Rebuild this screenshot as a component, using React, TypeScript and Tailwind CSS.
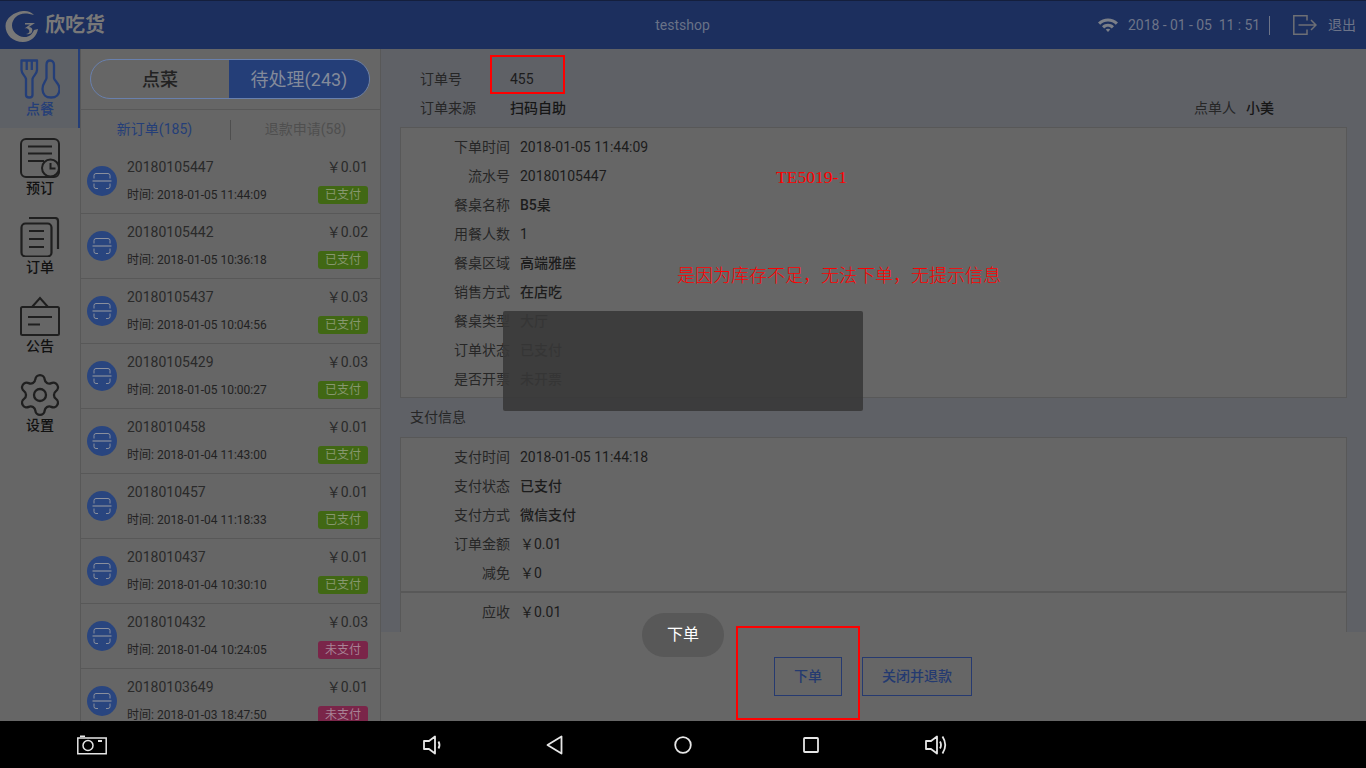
import { Settings } from "lucide-react";

const orders = [
  ["20180105447", "￥0.01", "2018-01-05 11:44:09", true],
  ["20180105442", "￥0.02", "2018-01-05 10:36:18", true],
  ["20180105437", "￥0.03", "2018-01-05 10:04:56", true],
  ["20180105429", "￥0.03", "2018-01-05 10:00:27", true],
  ["2018010458", "￥0.01", "2018-01-04 11:43:00", true],
  ["2018010457", "￥0.01", "2018-01-04 11:18:33", true],
  ["2018010437", "￥0.01", "2018-01-04 10:30:10", true],
  ["2018010432", "￥0.03", "2018-01-04 10:24:05", false],
  ["20180103649", "￥0.01", "2018-01-03 18:47:50", false],
] as const;

const box1 = [
  ["下单时间", "2018-01-05 11:44:09"],
  ["流水号", "20180105447"],
  ["餐桌名称", "B5桌"],
  ["用餐人数", "1"],
  ["餐桌区域", "高端雅座"],
  ["销售方式", "在店吃"],
  ["餐桌类型", "大厅"],
  ["订单状态", "已支付"],
  ["是否开票", "未开票"],
];
const box2 = [
  ["支付时间", "2018-01-05 11:44:18"],
  ["支付状态", "已支付"],
  ["支付方式", "微信支付"],
  ["订单金额", "￥0.01"],
  ["减免", "￥0"],
];

function Row({ label, value }: { label: string; value: string }) {
  const cjk = /[\u4e00-\u9fff]/.test(value);
  return (
    <div className="flex h-[29px] items-center text-[14px]">
      <div className="w-[109px] text-right text-[#262626]">{label}</div>
      <div className={`ml-[10px] text-[#1c1c1c] ${cjk ? "font-medium" : "font-normal"}`}>{value}</div>
    </div>
  );
}

function ScanIcon() {
  return (
    <svg width="30" height="30" viewBox="0 0 30 30" className="shrink-0">
      <circle cx="15" cy="15" r="15" fill="#29457f" />
      <path d="M7 12.500V9.500Q7 7.500 9 7.500H21Q23 7.500 23 9.500V12.500" fill="none" stroke="#8a8f9c" strokeWidth="1" />
      <path d="M7 17.500V20.500Q7 22.500 9 22.500H11M19 22.500H21Q23 22.500 23 20.500V17.500" fill="none" stroke="#8a8f9c" strokeWidth="1" />
      <path d="M5.500 15H24.500" stroke="#8a8f9c" strokeWidth="1.200" />
    </svg>
  );
}

function SideItem({ label, active, children }: { label: string; active?: boolean; children: React.ReactNode }) {
  return (
    <div className={`flex h-[79px] flex-col items-center pt-[10px] ${active ? "border-r-2 border-[#243e78] bg-[#5e6166] pl-[2px]" : ""}`}>
      <div className="h-[40px] w-[40px]">{children}</div>
      <div className={`text-[14px] font-medium leading-[20px] ${active ? "text-[#243e78]" : "text-[#111111]"}`}>{label}</div>
    </div>
  );
}

export default function App() {
  return (
    <div className="relative flex h-[768px] w-[1366px] flex-col overflow-hidden bg-[#666666] font-['Roboto','Noto_Sans_CJK_SC',sans-serif]">
      <header className="flex h-[49px] shrink-0 items-center border-t border-[#141f3d] bg-[#1c2f5e]">
        <svg width="36" height="36" viewBox="0 0 36 36" className="ml-[4px] shrink-0">
          <path d="M30 8C27 4.500 23 3.500 19 4C10 5 1.500 11 1.500 19C1.500 28 9 35 19 35C27 35 33 29 34 22L30 23C28 28 24 30.500 20 30C14 29.500 8 25 8 18.500C8 12 14 6.500 21 6.500C24 6.500 27 7.200 30 8Z" fill="#787878" />
          <path d="M21 16H31L25 20C28 20.500 29 22 28 25C27 27 25 27.500 22 27C25 26.500 26 24.500 25 23C24 21.500 22.500 21 20.500 21.500L26 17.500H21Z" fill="#787878" />
        </svg>
        <div className="ml-[5px] text-[20px] font-bold leading-none text-[#787878]">欣吃货</div>
        <div className="flex-1 text-center text-[14px] text-[#697287]">
          <span className="relative left-[81px]">testshop</span>
        </div>
        <svg width="20" height="14" viewBox="0 0 20 14" className="shrink-0">
          <path d="M0 4.500C5.500 -1 14.500 -1 20 4.500L17.800 6.800C13.500 2.500 6.500 2.500 2.200 6.800Z M4 8.200C7.500 5 12.500 5 16 8.200L13.800 10.400C11.500 8.300 8.500 8.300 6.200 10.400Z M7.700 11.600C9 10.600 11 10.600 12.300 11.600L10 14Z" fill="#7b7f88" />
        </svg>
        <div className="ml-[10px] w-[131px] whitespace-pre text-[14px] tracking-[-0.05px] text-[#6d7488]">2018 - 01 - 05  11 : 51</div>
        <div className="ml-[10px] h-[19px] w-px bg-[#6d7488]" />
        <svg width="24" height="20" viewBox="0 0 24 20" className="ml-[23px] shrink-0" fill="none" stroke="#6d6f75" strokeWidth="1.500">
          <path d="M14 5.500V0.800H0.800V19.200H14V14.500" />
          <path d="M5.500 10H23M18 5L23 10L18 15" />
        </svg>
        <div className="ml-[11px] mr-[10px] text-[14px] text-[#6d7488]">退出</div>
      </header>

      <div className="flex min-h-0 flex-1">
        <nav className="w-[80px] shrink-0 bg-[#666666]">
          <SideItem label="点餐" active>
            <svg width="40" height="40" viewBox="0 0 40 40" fill="none" stroke="#243e78" strokeWidth="2.300" strokeLinejoin="round">
              <path d="M1.500 1.500H17V11C17 15 13 17 12.500 20V36Q12.500 38.500 9.250 38.500Q6 38.500 6 36V20C5.500 17 1.500 15 1.500 11Z" />
              <path d="M6.700 2V11M11.800 2V11" />
              <path d="M30 1.500C27.500 1.500 26.500 3.500 26.500 6V19C26.500 21.500 22.500 24 22.500 30C22.500 35.500 26 38.500 31 38.500C36 38.500 39.500 35.500 39.500 30C39.500 24 34 21.500 34 19V6C34 3.500 32.500 1.500 30 1.500Z" />
            </svg>
          </SideItem>
          <SideItem label="预订">
            <svg width="40" height="40" viewBox="0 0 40 40" fill="none" stroke="#1f1f1f" strokeWidth="2">
              <rect x="1" y="1" width="38" height="38" rx="5" />
              <path d="M8 8.500H32M8 15.500H32M8 23H24" />
              <circle cx="30.500" cy="30" r="8.500" fill="#666666" />
              <path d="M30.500 25V30.500H35.500" />
            </svg>
          </SideItem>
          <SideItem label="订单">
            <svg width="40" height="40" viewBox="0 0 40 40" fill="none" stroke="#1f1f1f" strokeWidth="2.200">
              <rect x="1.500" y="6.500" width="30" height="33" rx="4" />
              <path d="M9 1H35Q38 1 38 4V32" />
              <path d="M9 14H24M9 22H24M9 30H24" />
            </svg>
          </SideItem>
          <SideItem label="公告">
            <svg width="40" height="40" viewBox="0 0 40 40" fill="none" stroke="#1f1f1f" strokeWidth="2">
              <path d="M12 11L20 2L28 11" />
              <rect x="1" y="11" width="38" height="28" rx="1.500" />
              <path d="M8 21H32M8 28.500H20" />
            </svg>
          </SideItem>
          <SideItem label="设置">
            <Settings size={48} strokeWidth={1.15} color="#1f1f1f" className="-m-[4px]" />
          </SideItem>
        </nav>

        <aside className="flex w-[301px] shrink-0 flex-col border-x border-[#585858] bg-[#666666]">
          <div className="h-[61px] shrink-0 border-b border-[#585858] pl-[9px] pt-[10px]">
            <div className="flex h-[40px] w-[280px] overflow-hidden rounded-full border border-[#6980ad]">
              <div className="flex w-[138px] items-center justify-center text-[18px] font-medium text-[#222222]">点菜</div>
              <div className="flex flex-1 items-center justify-center bg-[#243e78] text-[18px] text-[#838a9a]">待处理(243)</div>
            </div>
          </div>
          <div className="flex h-[39px] shrink-0 items-center text-[14px]">
            <div className="w-[147px] text-center text-[#243e78]">新订单(185)</div>
            <div className="ml-[2px] h-[20px] w-px bg-[#4e4e4e]" />
            <div className="flex-1 text-center text-[#4f4f4f]">退款申请(58)</div>
          </div>
          {orders.map(([id, price, time, paid]) => (
            <div key={id} className="flex h-[65px] shrink-0 border-b border-[#585858] pl-[6px] pr-[12px]">
              <div className="flex h-full items-center pb-[1px]">
                <ScanIcon />
              </div>
              <div className="ml-[10px] flex-1">
                <div className="flex h-[37px] items-center justify-between text-[14px] text-[#2a2a2a]">
                  <span>{id}</span>
                  <span>{price}</span>
                </div>
                <div className="flex items-center justify-between">
                  <span className="text-[12px] text-[#222222]">时间: {time}</span>
                  <span className={`flex h-[18px] w-[50px] items-center justify-center rounded-[3px] text-[12px] ${paid ? "bg-[#416814] text-[#87976f]" : "bg-[#7a2549] text-[#a88395]"}`}>
                    {paid ? "已支付" : "未支付"}
                  </span>
                </div>
              </div>
            </div>
          ))}
        </aside>

        <main className="flex min-w-0 flex-1 flex-col bg-[#666666]">
          <div className="h-[583px] overflow-hidden bg-[#5f6166] px-[19px] pt-[16px]">
            <div className="flex h-[29px] items-center pl-[20px] text-[14px]">
              <span className="w-[90px] text-[#262626]">订单号</span>
              <span className="text-[#1c1c1c]">455</span>
            </div>
            <div className="mb-[4px] flex h-[29px] items-center pl-[20px] text-[14px]">
              <span className="w-[90px] text-[#262626]">订单来源</span>
              <span className="font-medium text-[#161616]">扫码自助</span>
              <span className="ml-auto text-[#262626]">点单人</span>
              <span className="ml-[10px] mr-[73px] font-medium text-[#161616]">小美</span>
            </div>
            <div className="h-[271px] border border-[#585858] bg-[#666666] pt-[5px]">
              {box1.map(([l, v]) => (
                <Row key={l} label={l} value={v} />
              ))}
            </div>
            <div className="flex h-[39px] items-center pl-[10px] text-[14px] text-[#262626]">支付信息</div>
            <div className="h-[200px] border border-[#585858] bg-[#666666] pt-[5px]">
              {box2.map(([l, v]) => (
                <Row key={l} label={l} value={v} />
              ))}
              <div className="mt-[3px] h-[2px] bg-[#585858]" />
              <div className="pt-[5px]">
                <Row label="应收" value="￥0.01" />
              </div>
            </div>
          </div>
          <div className="flex flex-1 justify-center gap-[20px] pr-[1px] pt-[25px]">
            <button className="h-[39px] w-[68px] border border-[#263a70] text-[14px] font-medium text-[#243a70]">下单</button>
            <button className="h-[39px] w-[110px] border border-[#263a70] text-[14px] font-medium text-[#243a70]">关闭并退款</button>
          </div>
        </main>
      </div>

      <footer className="relative z-10 flex h-[47px] shrink-0 items-center bg-black">
        <svg width="30" height="20" viewBox="0 0 30 20" className="ml-[77px] shrink-0" fill="none" stroke="#e6e6e6" strokeWidth="1.500">
          <path d="M0.800 3H29.200V18.800H0.800ZM3 1.200H8" />
          <circle cx="11" cy="10.500" r="5" />
          <path d="M21 6H25" strokeWidth="2" />
        </svg>
        <svg width="20" height="20" viewBox="0 0 20 20" className="ml-[316px] shrink-0" fill="none" stroke="#e6e6e6" strokeWidth="1.800" strokeLinejoin="round">
          <path d="M1 6H6L12 1.500V18.500L6 14H1Z" />
          <path d="M15.500 6.500Q17.500 10 15.500 13.500" />
        </svg>
        <svg width="17" height="20" viewBox="0 0 17 20" className="ml-[103px] shrink-0" fill="none" stroke="#e6e6e6" strokeWidth="1.800" strokeLinejoin="round">
          <path d="M15.500 1.500V18.500L1.500 10Z" />
        </svg>
        <svg width="18" height="18" viewBox="0 0 18 18" className="ml-[111px] shrink-0" fill="none" stroke="#e6e6e6" strokeWidth="1.800">
          <circle cx="9" cy="9" r="7.800" />
        </svg>
        <svg width="16" height="16" viewBox="0 0 16 16" className="ml-[111px] shrink-0" fill="none" stroke="#e6e6e6" strokeWidth="1.800">
          <rect x="1" y="1" width="14" height="14" rx="0.800" />
        </svg>
        <svg width="24" height="20" viewBox="0 0 24 20" className="ml-[106px] shrink-0" fill="none" stroke="#e6e6e6" strokeWidth="1.800" strokeLinejoin="round">
          <path d="M1 6H6L12 1.500V18.500L6 14H1Z" />
          <path d="M15 6.500Q17 10 15 13.500M17.500 1.500Q23 10 17.500 18.500" />
        </svg>
      </footer>

      <div className="absolute left-[503px] top-[311px] h-[100px] w-[360px] rounded-[2px] bg-[#383838]/90" />
      <div className="absolute left-[642px] top-[613px] flex h-[44px] w-[82px] items-center justify-center rounded-full bg-[#585858] text-[16px] text-white">下单</div>
      <div className="absolute left-[490px] top-[55px] h-[39px] w-[75px] border-2 border-[#ff0000]" />
      <div className="absolute left-[736px] top-[626px] h-[94px] w-[124px] border-2 border-[#ff0000]" />
      <div className="absolute left-[776px] top-[168px] font-['Liberation_Serif',serif] text-[17.5px] leading-[18px] text-[#ff0000]">TE5019-1</div>
      <div className="absolute left-[677px] top-[263px] whitespace-nowrap text-[18px] font-light leading-[26px] text-[#ff0000]">是因为库存不足，无法下单，无提示信息</div>
    </div>
  );
}
